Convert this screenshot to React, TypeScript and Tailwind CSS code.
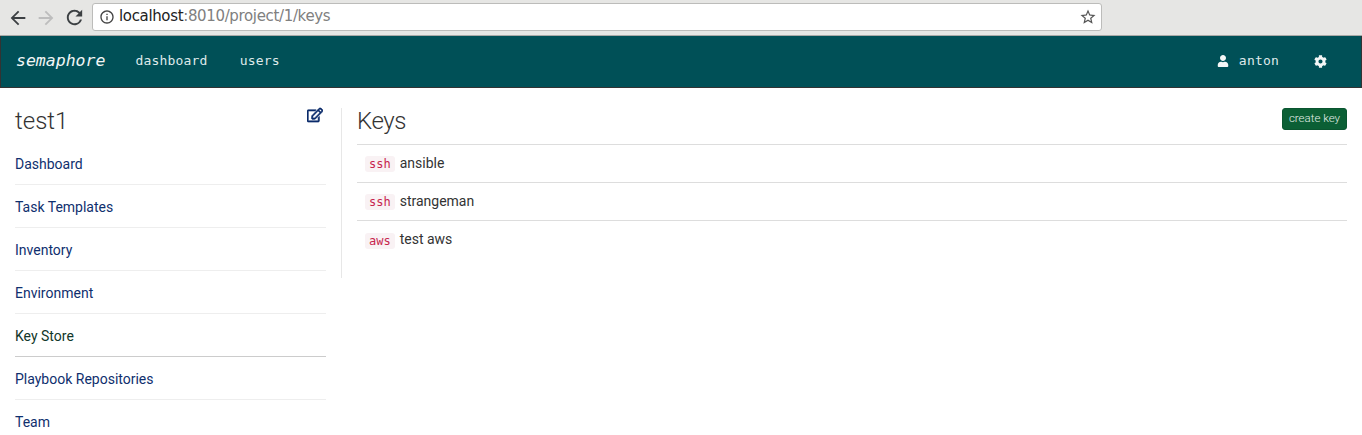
import React from "react";
import { FaCog, FaRegEdit, FaUser } from "react-icons/fa";
import { MdArrowBack, MdArrowForward, MdInfoOutline, MdRefresh, MdStarBorder } from "react-icons/md";

const sideLinks = [
  { label: "Dashboard" },
  { label: "Task Templates" },
  { label: "Inventory" },
  { label: "Environment" },
  { label: "Key Store", active: true },
  { label: "Playbook Repositories" },
  { label: "Team" },
];

const keys = [
  { type: "ssh", name: "ansible" },
  { type: "ssh", name: "strangeman" },
  { type: "aws", name: "test aws" },
];

const mono = "font-['DejaVu_Sans_Mono',monospace]";

const BrowserBar: React.FC = () => (
  <div className="h-[36px] bg-[#e6e6e4] border-b border-[#a9a9a7] flex items-center pl-[7px] pr-[260px] shrink-0">
    <MdArrowBack className="text-[#3c4043] text-[22px] shrink-0" />
    <MdArrowForward className="text-[#bdbdbd] text-[22px] ml-[6px] shrink-0" />
    <MdRefresh className="text-[#3c4043] text-[23px] ml-[6px] shrink-0" />
    <div className="ml-[6px] flex-1 h-[28px] mb-[2px] bg-white border border-[#bcbcba] rounded-[3px] flex items-center pl-[6px] pr-[4px]">
      <MdInfoOutline className="text-[#444] text-[16px] shrink-0" />
      <span className="ml-[4px] text-[15px] font-['DejaVu_Sans',sans-serif] tracking-[-0.35px] text-[#222] whitespace-nowrap">
        localhost<span className="text-[#808080]">:8010/project/1/keys</span>
      </span>
      <MdStarBorder className="ml-auto text-[#555] text-[18px]" />
    </div>
  </div>
);

const NavBar: React.FC = () => (
  <nav className={`h-[52px] bg-[#005057] border-x border-b border-[#333] flex items-center text-white shrink-0 ${mono}`}>
    <span className="ml-[15px] text-[16.5px] italic text-[#f2f6f6] -mt-[1px]">semaphore</span>
    <a className="ml-[30px] text-[13px] tracking-[0.2px] text-[#dfe9ea] -mt-[1px]">dashboard</a>
    <a className="ml-[32px] text-[13px] tracking-[0.2px] text-[#dfe9ea] -mt-[1px]">users</a>
    <div className="ml-auto flex items-center -mt-[1px]">
      <FaUser className="text-[12px] text-[#f4f7f7]" />
      <span className="ml-[10px] text-[13px] tracking-[0.2px] text-[#dfe9ea]">anton</span>
      <FaCog className="ml-[35px] mr-[34px] text-[13px] text-[#f4f7f7]" />
    </div>
  </nav>
);

const Sidebar: React.FC = () => (
  <aside className="w-[327px] shrink-0 pl-[15px] pr-[1px]">
    <div className="flex items-start justify-between h-[54px]">
      <h3 className="text-[24px] font-light leading-[26px] text-[#333] mt-[20px]">test1</h3>
      <FaRegEdit className="text-[#0b2c6b] stroke-[20] text-[16px] mt-[19px] mr-[3px]" />
    </div>
    <ul>
      {sideLinks.map((link) => (
        <li
          key={link.label}
          className={`h-[43px] flex items-center border-b text-[14px] pt-[3px] ${
            link.active ? "border-[#ccc] text-[#12372a]" : "border-[#eee] text-[#0f2f6e]"
          }`}
        >
          {link.label}
        </li>
      ))}
    </ul>
  </aside>
);

const KeyList: React.FC = () => (
  <main className="flex-1 mt-[20px] ml-[15px] mr-[15px] min-w-0">
    <div className="flex items-start justify-between h-[37px] border-b border-[#ddd]">
      <h3 className="text-[24px] font-light leading-[26px] tracking-[-0.4px] text-[#333]">Keys</h3>
      <button className="h-[22px] w-[65px] bg-[#0b5f35] border border-[#0a5530] rounded-[3px] text-[#e4efe8] text-[11.5px] font-light leading-none">
        create key
      </button>
    </div>
    {keys.map((key) => (
      <div key={key.name} className="h-[38px] flex items-center border-b border-[#ddd] last:border-b-0 pl-[8px] text-[14px] text-[#333]">
        <code className={`${mono} bg-[#f9f2f4] text-[#c7254e] text-[12px] px-[4px] py-[1px] rounded-[3px] leading-[14px] mt-[1px]`}>
          {key.type}
        </code>
        <span className="ml-[5px] -mt-[1px]">{key.name}</span>
      </div>
    ))}
  </main>
);

const App: React.FC = () => (
  <div className="h-[435px] overflow-hidden bg-white flex flex-col font-['Roboto',sans-serif]">
    <BrowserBar />
    <NavBar />
    <div className="flex">
      <Sidebar />
      <div className="w-px h-[170px] mt-[20px] ml-[14px] bg-[#e7e7e7] shrink-0" />
      <KeyList />
    </div>
  </div>
);

export default App;
